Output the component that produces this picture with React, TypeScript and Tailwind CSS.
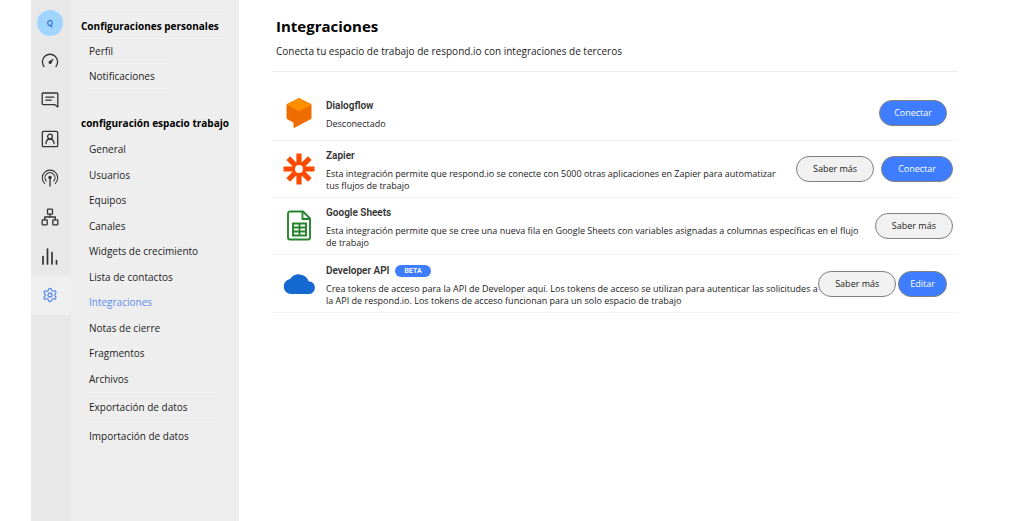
import type { ReactNode } from 'react';
import { clsx } from 'clsx';
import { Settings } from 'lucide-react';

type NavItem = { label: string; active?: boolean };

const workspaceItems: NavItem[] = [
  { label: 'General' },
  { label: 'Usuarios' },
  { label: 'Equipos' },
  { label: 'Canales' },
  { label: 'Widgets de crecimiento' },
  { label: 'Lista de contactos' },
  { label: 'Integraciones', active: true },
  { label: 'Notas de cierre' },
  { label: 'Fragmentos' },
  { label: 'Archivos' },
];

function Icon({ children }: { children: ReactNode }) {
  return (
    <svg
      viewBox="0 0 18 18"
      className="size-[18px]"
      fill="none"
      stroke="currentColor"
      strokeWidth="1.3"
      strokeLinecap="round"
      strokeLinejoin="round"
      aria-hidden="true"
    >
      {children}
    </svg>
  );
}

const railItems: { label: string; active?: boolean; icon: ReactNode }[] = [
  {
    label: 'Panel',
    icon: (
      <Icon>
        <path d="M3 14.5A7.6 7.6 0 1 1 15 14.5" />
        <path d="M12.8 6.6 8 9.2a1.600 1.600 0 1 0 2.300 2.300Z" fill="currentColor" stroke="none" />
      </Icon>
    ),
  },
  {
    label: 'Mensajes',
    icon: (
      <Icon>
        <path d="M2 2h14a.8.8 0 0 1 .8.8V16l-3.200-2.400H2a.8.8 0 0 1-.8-.8v-10A.8.8 0 0 1 2 2Z" />
        <path d="M4.800 6.200h8M4.800 9.200h5.400" />
      </Icon>
    ),
  },
  {
    label: 'Contactos',
    icon: (
      <Icon>
        <rect x="1.300" y="1.300" width="15.400" height="15.400" rx="1.200" />
        <circle cx="9" cy="6.600" r="2.400" />
        <path d="M4.900 13.600c.3-2.900 2-4.600 4.100-4.600s3.800 1.700 4.100 4.600" />
      </Icon>
    ),
  },
  {
    label: 'Difusiones',
    icon: (
      <Icon>
        <path d="M3.600 14.300A7.700 7.700 0 1 1 14.400 14.300" strokeWidth="1.100" />
        <path d="M5.300 12A5 5 0 1 1 12.700 12" strokeWidth="1.100" />
        <path d="M9 8.500V17" />
        <circle cx="9" cy="8.500" r="1.100" fill="currentColor" />
      </Icon>
    ),
  },
  {
    label: 'Flujos de trabajo',
    icon: (
      <Icon>
        <rect x="6.500" y="1.200" width="5" height="5" rx=".5" />
        <rect x="1.200" y="11.800" width="5" height="5" rx=".5" />
        <rect x="11.800" y="11.800" width="5" height="5" rx=".5" />
        <path d="M9 6.200V9M3.700 11.800V9h10.600v2.800" />
      </Icon>
    ),
  },
  {
    label: 'Informes',
    icon: (
      <Icon>
        <path d="M2 9.500V17M6.500 2v15M11 5.500V17M15.500 13.500V17" strokeWidth="1.700" />
      </Icon>
    ),
  },
  {
    label: 'Ajustes',
    active: true,
    icon: <Settings className="size-4" strokeWidth={2} aria-hidden="true" />,
  },
];

function DialogflowLogo() {
  return (
    <svg viewBox="0 0 32 32" className="size-8" strokeLinejoin="round" aria-hidden="true">
      <path
        d="M16 1.500 28 7.500V21.500L11 30.500V25.500L4 21.500V7.500Z"
        fill="#ef6c00"
        stroke="#ef6c00"
      />
      <path d="M16 1.500 28 7.500 16 14 4 7.500Z" fill="#ff9100" stroke="#ff9100" strokeWidth=".6" />
    </svg>
  );
}

function ZapierLogo() {
  return (
    <svg viewBox="0 0 32 32" className="size-8" fill="none" stroke="#ff4a00" aria-hidden="true">
      <path
        d="M16 .5v31M.5 16h31M5.200 5.200l21.600 21.600M26.800 5.200 5.200 26.800"
        strokeWidth="5.200"
      />
      <circle cx="16" cy="16" r="5.500" fill="#fff" strokeWidth="3" />
    </svg>
  );
}

function SheetsLogo() {
  return (
    <svg viewBox="0 0 32 32" className="size-8" fill="none" stroke="#26862e" strokeWidth="1.900" aria-hidden="true">
      <path d="M7 1.500h13l7 7v19a2 2 0 0 1-2 2H7a2 2 0 0 1-2-2v-24a2 2 0 0 1 2-2Z" />
      <path d="M19.500 2V9H26.500" />
      <path d="M10 13.500h13v12H10ZM10 17.500h13M10 21.500h13M16.500 13.500v12" />
    </svg>
  );
}

function CloudLogo() {
  return (
    <svg viewBox="0 0 32 32" className="size-8" aria-hidden="true">
      <path
        d="M8 26A7.500 7.500 0 0 1 7 11.100 10.500 10.500 0 0 1 25.600 13.200 6.400 6.400 0 0 1 25.500 26Z"
        fill="#1769d2"
      />
    </svg>
  );
}

function PillButton({
  children,
  primary,
  className,
}: {
  children: ReactNode;
  primary?: boolean;
  className: string;
}) {
  return (
    <button
      type="button"
      className={clsx(
        'h-[26px] rounded-full border border-[#808080] text-[9px] whitespace-nowrap',
        primary ? 'bg-[#3e7dff] text-white' : 'bg-[#f1f1f1] text-[#222]',
        className,
      )}
    >
      {children}
    </button>
  );
}

function IntegrationRow({
  logo,
  name,
  badge,
  actions,
  className,
  children,
}: {
  logo: ReactNode;
  name: string;
  badge?: string;
  actions: ReactNode;
  className?: string;
  children: ReactNode;
}) {
  return (
    <li className={clsx('flex items-center border-b border-[#f3f3f3] pl-[11px]', className)}>
      <span className="shrink-0">{logo}</span>
      <div className="ml-[11px] min-w-0 flex-1 pt-[2px]">
        <h2 className="flex items-center gap-[6px] font-[Roboto] text-[10px] leading-4 font-semibold text-[#333]">
          {name}
          {badge && (
            <span className="rounded-full bg-[#3e7dff] px-[9px] text-[7px] leading-3 text-white">{badge}</span>
          )}
        </h2>
        <p className="mt-1 text-[9px] leading-3">{children}</p>
      </div>
      {actions}
    </li>
  );
}

export default function App() {
  return (
    <div className="flex min-h-screen bg-white pl-[31px] font-['Open_Sans',sans-serif] text-[10px] text-[#222]">
      <nav aria-label="Principal" className="w-10 shrink-0 bg-[#e8e8e8] pt-[3px]">
        <div className="flex h-[39px] items-center justify-center pr-[2px]">
          <span className="flex size-[26px] items-center justify-center rounded-full bg-[#9fd5ff] text-[8px] font-semibold text-[#1f5fd0]">
            Q
          </span>
        </div>
        {railItems.map((item) => (
          <a
            key={item.label}
            href="#"
            aria-label={item.label}
            className={clsx(
              'flex h-[39px] items-center justify-center pr-[2px] pb-[2px]',
              item.active ? 'bg-[#efefef] text-[#5b8def]' : 'text-[#333]',
            )}
          >
            {item.icon}
          </a>
        ))}
      </nav>

      <aside className="w-[168px] shrink-0 bg-[#eee] pt-[13px] pl-[7px]">
        <h2 className="mr-[11px] border-y border-[#f3f3f3] pl-[3px] leading-6 font-bold text-black">
          Configuraciones personales
        </h2>
        <ul className="mr-[71px] ml-2">
          {['Perfil', 'Notificaciones'].map((label) => (
            <li key={label} className="border-b border-[#f3f3f3] pl-[3px] leading-6">
              <a href="#">{label}</a>
            </li>
          ))}
        </ul>

        <h2 className="mt-[22px] mb-[2px] pl-[3px] leading-6 font-bold whitespace-nowrap text-black">
          configuración espacio trabajo
        </h2>
        <ul className="ml-[11px]">
          {workspaceItems.map((item) => (
            <li key={item.label} className="odd:leading-[25px] even:leading-[26px]">
              <a href="#" className={clsx(item.active && 'text-[#5b8def]')}>
                {item.label}
              </a>
            </li>
          ))}
        </ul>
        <ul className="mr-[24px] ml-2">
          {['Exportación de datos', 'Importación de datos'].map((label) => (
            <li key={label} className="border-t border-[#f3f3f3] pl-[3px] leading-7">
              <a href="#">{label}</a>
            </li>
          ))}
        </ul>
      </aside>

      <main className="mr-[66px] ml-[33px] min-w-0 flex-1 pt-[15px]">
        <header className="border-b border-[#ececec] pb-[11px] pl-1">
          <h1 className="text-[15px] leading-[22px] font-bold text-black">Integraciones</h1>
          <p className="mt-[6px] leading-[17px]">
            Conecta tu espacio de trabajo de respond.io con integraciones de terceros
          </p>
        </header>
        <ul>
          <IntegrationRow
            className="h-[69px] pt-[14px]"
            logo={<DialogflowLogo />}
            name="Dialogflow"
            actions={
              <div className="mr-[11px] flex">
                <PillButton primary className="px-[14px]">
                  Conectar
                </PillButton>
              </div>
            }
          >
            Desconectado
          </IntegrationRow>
          <IntegrationRow
            className="h-[57px]"
            logo={<ZapierLogo />}
            name="Zapier"
            actions={
              <div className="mr-[5px] ml-[7px] flex gap-[7px]">
                <PillButton className="px-4">Saber más</PillButton>
                <PillButton primary className="px-4">
                  Conectar
                </PillButton>
              </div>
            }
          >
            Esta integración permite que respond.io se conecte con 5000 otras aplicaciones en Zapier para automatizar tus
            flujos de trabajo
          </IntegrationRow>
          <IntegrationRow
            className="h-[57px]"
            logo={<SheetsLogo />}
            name="Google Sheets"
            actions={
              <div className="mr-[5px] ml-[7px] flex">
                <PillButton className="px-4">Saber más</PillButton>
              </div>
            }
          >
            Esta integración permite que se cree una nueva fila en Google Sheets con variables asignadas a columnas
            específicas en el flujo de trabajo
          </IntegrationRow>
          <IntegrationRow
            className="h-[58px]"
            logo={<CloudLogo />}
            name="Developer API"
            badge="BETA"
            actions={
              <div className="mr-[11px] flex gap-[2px]">
                <PillButton className="px-4">Saber más</PillButton>
                <PillButton primary className="px-[11px]">
                  Editar
                </PillButton>
              </div>
            }
          >
            Crea tokens de acceso para la API de Developer aquí. Los tokens de acceso se utilizan para autenticar las
            solicitudes a la API de respond.io. Los tokens de acceso funcionan para un solo espacio de trabajo
          </IntegrationRow>
        </ul>
      </main>
    </div>
  );
}
